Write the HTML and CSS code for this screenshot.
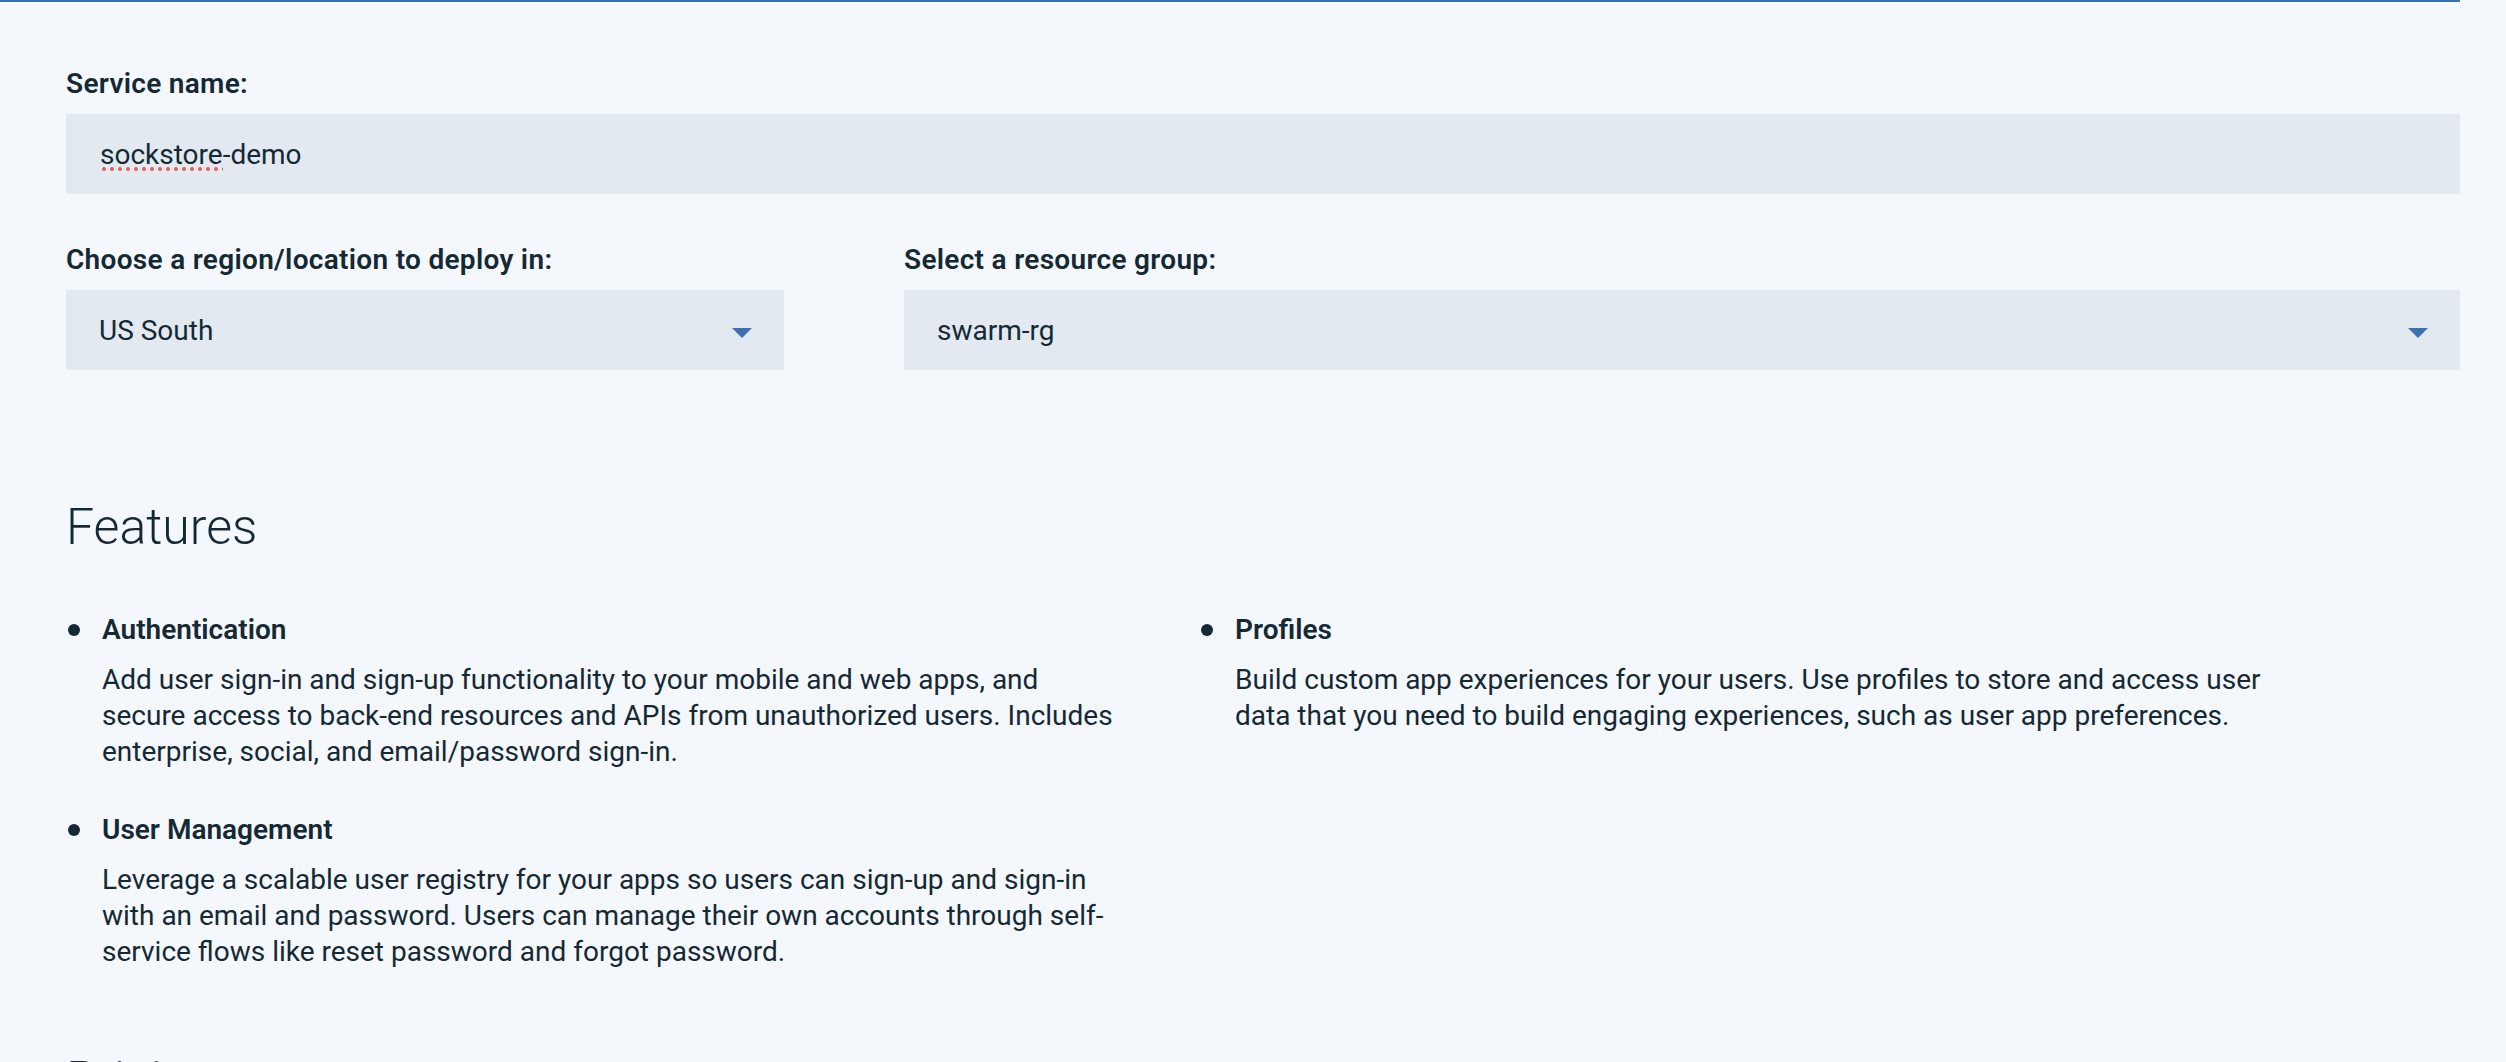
FILE: index.html
```html
<!DOCTYPE html>
<html lang="en">
<head>
<meta charset="utf-8">
<title>Create service</title>
<link rel="stylesheet" href="styles.css">
</head>
<body>
<div class="page">
  <div class="topline"></div>
  <form class="form">
    <div class="field">
      <label class="label">Service name:</label>
      <div class="input"><span class="misspelled">sockstore</span>-demo</div>
    </div>
    <div class="row">
      <div class="field field-region">
        <label class="label">Choose a region/location to deploy in:</label>
        <div class="input select">
          <span>US South</span>
          <svg class="caret" width="20" height="10" viewBox="0 0 20 10"><polygon points="0,0 20,0 10,10" fill="#3d70b2"/></svg>
        </div>
      </div>
      <div class="field field-group">
        <label class="label">Select a resource group:</label>
        <div class="input select">
          <span>swarm-rg</span>
          <svg class="caret" width="20" height="10" viewBox="0 0 20 10"><polygon points="0,0 20,0 10,10" fill="#3d70b2"/></svg>
        </div>
      </div>
    </div>
  </form>

  <section class="features">
    <h2 class="heading">Features</h2>
    <ul class="feature-list">
      <li class="feature">
        <div class="feature-body">
          <h3 class="feature-title">Authentication</h3>
          <p class="feature-text">Add user sign-in and sign-up functionality to your mobile and web apps, and<br>secure access to back-end resources and APIs from unauthorized users. Includes<br>enterprise, social, and email/password sign-in.</p>
        </div>
      </li>
      <li class="feature">
        <div class="feature-body">
          <h3 class="feature-title">Profiles</h3>
          <p class="feature-text">Build custom app experiences for your users. Use profiles to store and access user<br>data that you need to build engaging experiences, such as user app preferences.</p>
        </div>
      </li>
      <li class="feature">
        <div class="feature-body">
          <h3 class="feature-title">User Management</h3>
          <p class="feature-text">Leverage a scalable user registry for your apps so users can sign-up and sign-in<br>with an email and password. Users can manage their own accounts through self-<br>service flows like reset password and forgot password.</p>
        </div>
      </li>
    </ul>
  </section>

  <section class="pricing">
    <h2 class="heading">Pricing</h2>
  </section>
</div>
</body>
</html>
```

FILE: styles.css
```css
* { box-sizing: border-box; }

html, body {
  margin: 0;
  padding: 0;
  background: #f4f7fb;
  color: #152935;
  font-family: Roboto, "Liberation Sans", sans-serif;
  overflow: hidden;
}

.page {
  width: 2460px;
  height: 1062px;
  overflow: hidden;
}

.topline {
  height: 2px;
  background: #3d70b2;
}

.form {
  padding: 64px 0 0 66px;
  margin: 0;
}

.field {
  display: flex;
  flex-direction: column;
}

.label {
  font-size: 28px;
  line-height: 36px;
  font-weight: 600;
  letter-spacing: 0.3px;
  margin-bottom: 12px;
}

.input {
  height: 80px;
  background: #e2e9f1;
  display: flex;
  align-items: center;
  padding: 0 32px 0 34px;
  font-size: 28px;
  font-weight: 400;
  color: #152935;
}

.misspelled {
  background-image: radial-gradient(circle at 50% 50%, #f0605c 0, #f0605c 1.6px, rgba(240,96,92,0) 2.3px);
  background-size: 8px 4px;
  background-repeat: repeat-x;
  background-position: 0 100%;
}

.row {
  display: flex;
  margin-top: 48px;
}

.field-region {
  width: 718px;
  flex: none;
  margin-right: 120px;
}

.field-group {
  flex: 1;
}

.select {
  justify-content: space-between;
  padding-left: 33px;
}

.caret {
  display: block;
  margin-top: 6px;
}

.features {
  padding-left: 66px;
  margin-top: 127px;
}

.heading {
  margin: 0;
  font-size: 50px;
  line-height: 60px;
  font-weight: 300;
  color: #152935;
}

.feature-list {
  list-style: none;
  margin: 55px 0 0 0;
  padding: 0;
  display: grid;
  grid-template-columns: 1067px 1067px;
  column-gap: 66px;
  row-gap: 42px;
  align-items: start;
}

.feature {
  display: flex;
}

.feature::before {
  content: "";
  flex: none;
  width: 12px;
  height: 12px;
  border-radius: 50%;
  background: #152935;
  margin: 12px 22px 0 2px;
}

.feature-body {
  flex: 1;
}

.feature-title {
  margin: 0;
  font-size: 28px;
  line-height: 36px;
  font-weight: 600;
}

.feature-text {
  margin: 14px 0 0 0;
  font-size: 28px;
  line-height: 36px;
  font-weight: 400;
  white-space: nowrap;
}

.pricing {
  padding-left: 66px;
  margin-top: 80px;
}
```
